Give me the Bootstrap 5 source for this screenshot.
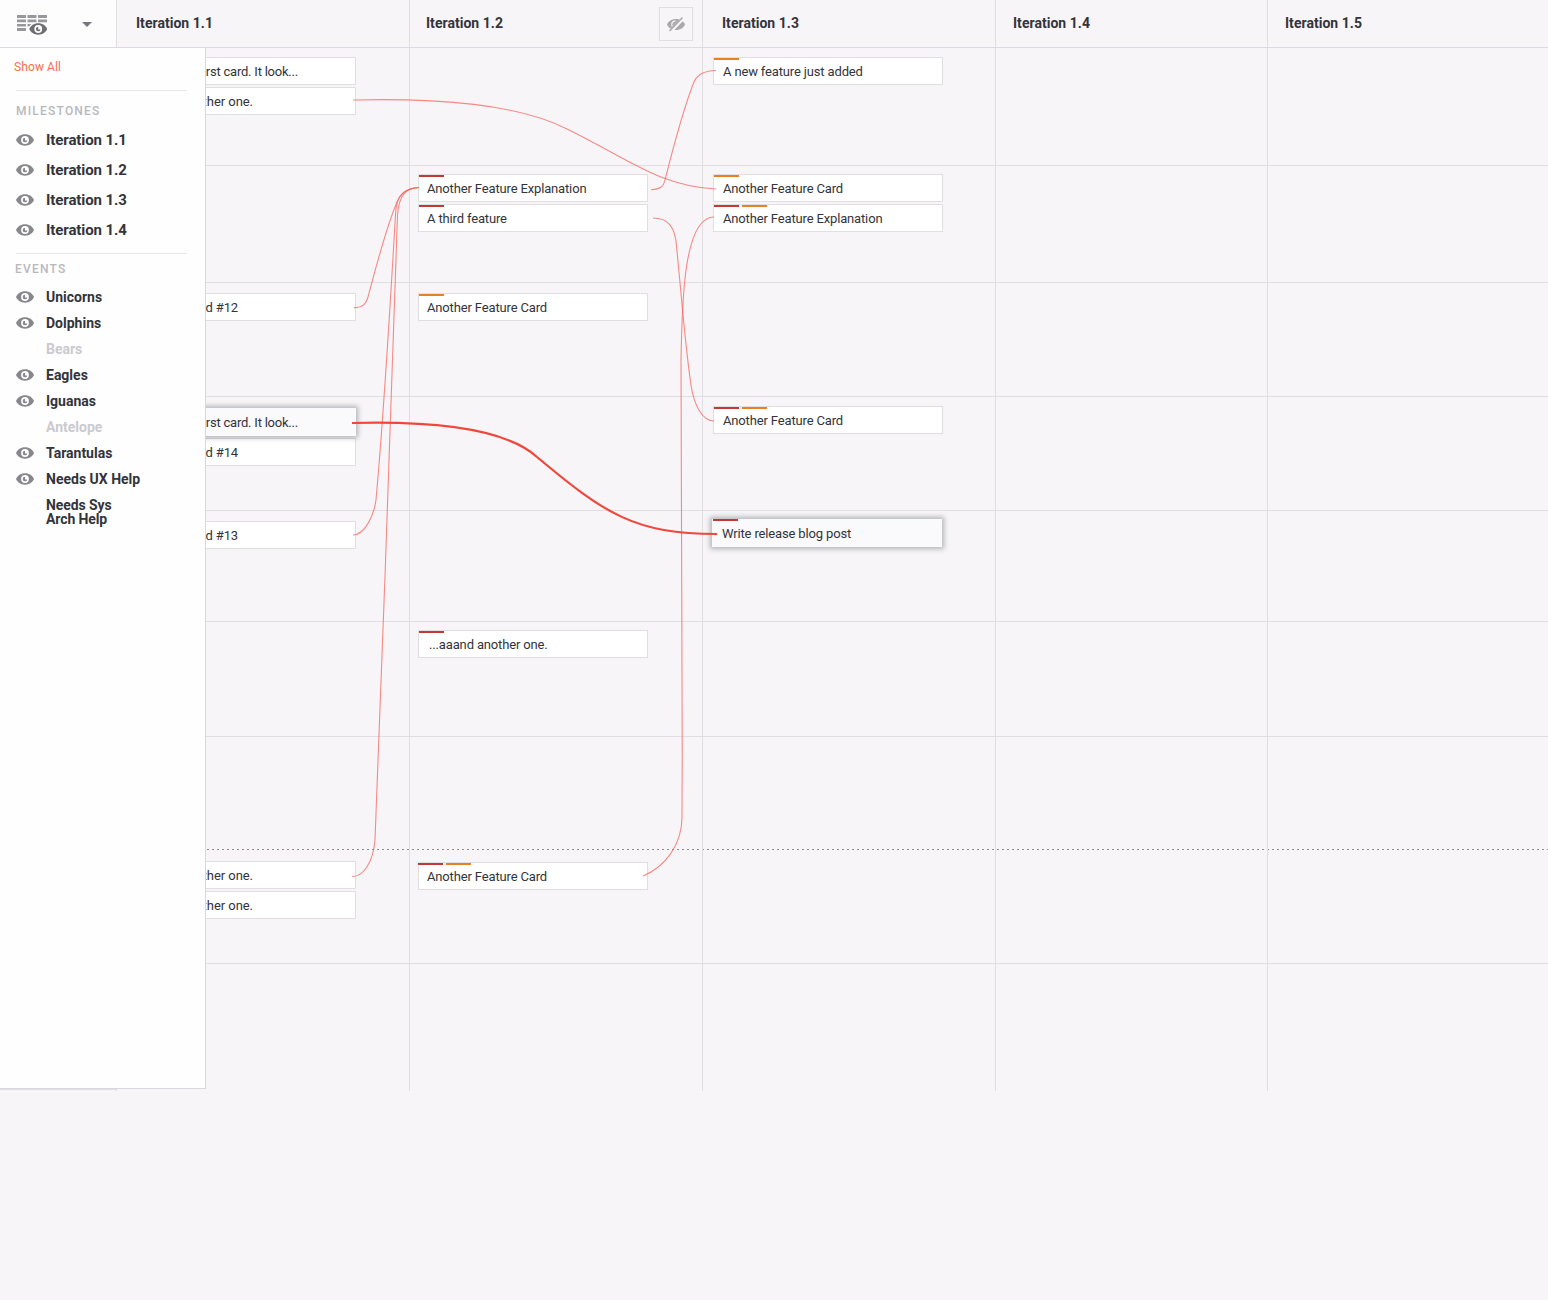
<!DOCTYPE html>
<html lang="en">
<head>
<meta charset="utf-8">
<meta name="viewport" content="width=device-width, initial-scale=1">
<title>Iteration board</title>
<link href="https://cdn.jsdelivr.net/npm/bootstrap@5.3.0/dist/css/bootstrap.min.css" rel="stylesheet">
<style>
body{background:#f7f5f8;font-family:Roboto,"Liberation Sans",sans-serif;font-size:13px;line-height:20px;color:#33343a;overflow-x:hidden}
.board{--line:#e0dee3;width:1548px;height:1300px}
.board-head{height:48px;border-bottom:1px solid #dddbe1}
.head-cell,.lane-cell{border-right:1px solid var(--line);flex:none}
.head-cell{font-size:14px;font-weight:700;padding-bottom:1px;letter-spacing:.03px}
.head-cell:last-child,.lane-cell:last-child{border-right:0}
.w-menu{width:117px}.w-wide{width:293px}.w-mid{width:272px}.w-last{width:280px}
.ps-a{padding-left:19px}.ps-b{padding-left:16px}.ps-c{padding-left:19px}.ps-d{padding-left:17px}
.menu-toggle{padding:2px 24px 0 17px;background:#fdfdfe}
.hide-btn{width:34px;height:34px;border:1px solid #e0dee3;border-radius:0;margin:2px 9px 0 0;padding:0}
.lane{border-bottom:1px solid var(--line);flex:none}
.lane-dotted{border-bottom:0;background:repeating-linear-gradient(90deg,#8e8d93 0 2px,transparent 2px 5px) 207px 100%/100% 1px no-repeat}
.lane:last-child{border-bottom:0}
.lane-cell{display:flex;flex-direction:column;gap:2px}
.in-1{padding-left:9px}.in-2{padding-left:8px}.in-3{padding-left:10px}
.dp-8{padding-top:8px}.dp-9{padding-top:9px}.dp-10{padding-top:10px}.dp-11{padding-top:11px}.dp-12{padding-top:12px}
.feature{position:relative;width:230px;height:28px;flex:none;background:#fff;border:1px solid var(--line);padding:2px 8px 0;display:flex;align-items:center;white-space:nowrap;letter-spacing:-.15px}
.in-3 .feature{padding-left:9px}
.feature.end-long{justify-content:flex-end;padding-right:57px;letter-spacing:-.22px}
.feature.end-num{justify-content:flex-end;padding-right:117px}
.feature.end-one{justify-content:flex-end;padding-right:102px;letter-spacing:-.05px}
.feature.picked{background:#faf9fc;border-color:#faf9fc;box-shadow:0 0 5px 2px rgba(50,55,65,.34);z-index:1}
.feature.nudge{margin-left:-1px}
.tags{position:absolute;left:0;top:0;display:flex;gap:3px}
.tags.flush{left:-1px}
.picked .tags{top:-1px}
.tags i{width:25px;height:2px;background:#c23a34}
.tags i.amber{background:#e68225}
.ms-dots{margin-left:2px}
.links{position:absolute;left:0;top:0;pointer-events:none;z-index:2}
.links path{fill:none;stroke:#f4665f;stroke-opacity:.75;stroke-width:1.1}
.links .strong{stroke:#f0463b;stroke-opacity:1;stroke-width:2.2}
.filter{position:absolute;left:0;top:48px;width:206px;height:1041px;background:#fefefe;border-right:1px solid #d9d7dd;border-bottom:1px solid #d9d7dd;z-index:3}
.gutter-end{width:117px;height:1px;background:#e0dee3;position:absolute;left:0;top:1089px}
.show-all{font-size:12px;color:#f3704f;text-decoration:none;padding:9px 0 13px 14px;letter-spacing:.1px}
.rule{height:1px;background:#e8e7ea;margin:0 18px 0 16px}
.group-name{font-size:12px;font-weight:500;letter-spacing:1.22px;color:#b9b8be;line-height:20px}
.miles-name{padding:10px 0 4px 16px}
.events-name{padding:5px 0 5px 15px}
.item{display:flex;align-items:center;padding-left:16px;font-weight:700;gap:12px}
.item svg,.item .no-eye{width:18px;flex:none}
.iter .item{height:30px;font-size:15px;letter-spacing:-.1px}
.events .item{height:26px;font-size:14px}
.events .off{color:#cbcacf}
.events .two{height:40px;line-height:14px;letter-spacing:-.1px}
</style>
</head>
<body>
<svg width="0" height="0" class="position-absolute" aria-hidden="true">
  <symbol id="eye" viewBox="0 0 18 12">
    <path fill="currentColor" d="M0 6C1.500 2.600 4.500.3 9 .3S16.500 2.600 18 6C16.500 9.400 13.500 11.700 9 11.700S1.500 9.400 0 6Z"/>
    <circle cx="9" cy="6" r="3.900" fill="#fff"/>
    <path fill="currentColor" d="M9 3.700A2.300 2.300 0 1 0 11.300 6.400H9Z"/>
  </symbol>
</svg>
<div class="board position-relative overflow-hidden">
  <header class="board-head d-flex">
    <div class="head-cell w-menu menu-toggle d-flex align-items-center justify-content-between">
      <svg width="31" height="20" viewBox="0 0 31 20">
        <path fill="#98979b" d="M0 0h9v3H0zM10.500 0h9v3h-9zM21 0h9v3h-9zM0 4.500h9v2.700H0zM10.500 4.500h9v2.700h-9zM21 4.500h9v2.700h-9zM0 9h9v2.600H0zM0 13h9v3H0zM10.500 9h4l-2.500 2.600h-1.500z"/>
        <path fill="#fdfdfe" d="M11 14C14 6 28 6 31 14V20H11Z"/>
        <svg x="12" y="8" width="18.500" height="12" color="#6f6e73"><use href="#eye"/></svg>
      </svg>
      <svg width="10" height="5" viewBox="0 0 10 5"><path fill="#77767b" d="M0 0h10L5 5Z"/></svg>
    </div>
    <div class="head-cell w-wide ps-a d-flex align-items-center">Iteration 1.1</div>
    <div class="head-cell w-wide ps-b d-flex align-items-center justify-content-between">Iteration 1.2
      <button class="btn hide-btn d-flex align-items-center justify-content-center" type="button" aria-label="Hide">
        <svg width="20" height="16" viewBox="0 0 20 16"><path fill="#a9a8ac" d="M1 8.500C2.500 5.300 5.500 3 10 3s7.500 2.300 9 5.500C17.500 11.700 14.500 14 10 14S2.500 11.700 1 8.500Z"/><path d="M9.500 4.800A3.800 3.800 0 0 0 6.200 10.500" fill="none" stroke="#f7f5f8" stroke-width="1.300"/><path d="M4.500 15.500 17.500 2" stroke="#f7f5f8" stroke-width="3.400"/><path d="M3.500 15 16.500 1.500" stroke="#a9a8ac" stroke-width="1.500"/></svg>
      </button>
    </div>
    <div class="head-cell w-wide ps-c d-flex align-items-center">Iteration 1.3</div>
    <div class="head-cell w-mid ps-d d-flex align-items-center">Iteration 1.4</div>
    <div class="head-cell w-last ps-d d-flex align-items-center">Iteration 1.5</div>
  </header>

  <main>
    <section class="lane d-flex" style="height:118px">
      <div class="lane-cell w-menu"></div>
      <div class="lane-cell w-wide in-1 dp-9">
        <div class="feature end-long">This is my first card. It look...</div>
        <div class="feature end-one">...aaand another one.</div>
      </div>
      <div class="lane-cell w-wide"></div>
      <div class="lane-cell w-wide in-3 dp-9"><div class="feature"><span class="tags"><i class="amber"></i></span>A new feature just added</div></div>
      <div class="lane-cell w-mid"></div><div class="lane-cell w-last"></div>
    </section>
    <section class="lane d-flex" style="height:117px">
      <div class="lane-cell w-menu"></div><div class="lane-cell w-wide"></div>
      <div class="lane-cell w-wide in-2 dp-8">
        <div class="feature"><span class="tags"><i></i></span>Another Feature Explanation</div>
        <div class="feature"><span class="tags"><i></i></span>A third feature</div>
      </div>
      <div class="lane-cell w-wide in-3 dp-8">
        <div class="feature"><span class="tags"><i class="amber"></i></span>Another Feature Card</div>
        <div class="feature"><span class="tags"><i></i><i class="amber"></i></span>Another Feature Explanation</div>
      </div>
      <div class="lane-cell w-mid"></div><div class="lane-cell w-last"></div>
    </section>
    <section class="lane d-flex" style="height:114px">
      <div class="lane-cell w-menu"></div>
      <div class="lane-cell w-wide in-1 dp-10"><div class="feature end-num">Feature Card #12</div></div>
      <div class="lane-cell w-wide in-2 dp-10"><div class="feature"><span class="tags"><i class="amber"></i></span>Another Feature Card</div></div>
      <div class="lane-cell w-wide"></div><div class="lane-cell w-mid"></div><div class="lane-cell w-last"></div>
    </section>
    <section class="lane d-flex" style="height:114px">
      <div class="lane-cell w-menu"></div>
      <div class="lane-cell w-wide in-1 dp-11">
        <div class="feature end-long picked">This is my first card. It look...</div>
        <div class="feature end-num">Feature Card #14</div>
      </div>
      <div class="lane-cell w-wide"></div>
      <div class="lane-cell w-wide in-3 dp-9"><div class="feature"><span class="tags"><i></i><i class="amber"></i></span>Another Feature Card</div></div>
      <div class="lane-cell w-mid"></div><div class="lane-cell w-last"></div>
    </section>
    <section class="lane d-flex" style="height:111px">
      <div class="lane-cell w-menu"></div>
      <div class="lane-cell w-wide in-1 dp-10"><div class="feature end-num">Feature Card #13</div></div>
      <div class="lane-cell w-wide"></div>
      <div class="lane-cell w-wide in-3 dp-8"><div class="feature picked nudge"><span class="tags"><i></i></span>Write release blog post</div></div>
      <div class="lane-cell w-mid"></div><div class="lane-cell w-last"></div>
    </section>
    <section class="lane d-flex" style="height:115px">
      <div class="lane-cell w-menu"></div><div class="lane-cell w-wide"></div>
      <div class="lane-cell w-wide in-2 dp-8"><div class="feature"><span class="tags"><i></i></span><span class="ms-dots">...aaand another one.</span></div></div>
      <div class="lane-cell w-wide"></div><div class="lane-cell w-mid"></div><div class="lane-cell w-last"></div>
    </section>
    <section class="lane lane-dotted d-flex" style="height:113px">
      <div class="lane-cell w-menu"></div><div class="lane-cell w-wide"></div><div class="lane-cell w-wide"></div><div class="lane-cell w-wide"></div><div class="lane-cell w-mid"></div><div class="lane-cell w-last"></div>
    </section>
    <section class="lane d-flex" style="height:114px">
      <div class="lane-cell w-menu"></div>
      <div class="lane-cell w-wide in-1 dp-11">
        <div class="feature end-one">...aaand another one.</div>
        <div class="feature end-one">...aaand another one.</div>
      </div>
      <div class="lane-cell w-wide in-2 dp-12"><div class="feature"><span class="tags flush"><i></i><i class="amber"></i></span>Another Feature Card</div></div>
      <div class="lane-cell w-wide"></div><div class="lane-cell w-mid"></div><div class="lane-cell w-last"></div>
    </section>
    <section class="lane d-flex" style="height:127px">
      <div class="lane-cell w-menu"></div><div class="lane-cell w-wide"></div><div class="lane-cell w-wide"></div><div class="lane-cell w-wide"></div><div class="lane-cell w-mid"></div><div class="lane-cell w-last"></div>
    </section>
  </main>

  <svg class="links" width="1548" height="1091" viewBox="0 0 1548 1091">
    <path d="M353 100C440 98 517 104 567 129C625 157 660 187 716 189"/>
    <path d="M651 189.700C660 189 663.500 187 665 180C674 145 682 112 694 82C698 73 706 71 716 70.500"/>
    <path d="M653 218C669 218 674 228 676 241C681 290 685 345 691 385C694 405 702 421 714 421"/>
    <path d="M643 876C665 867 682 845 682 817C683 660 681 500 681 360C682 300 684 217 714 217"/>
    <path d="M354 307.600C363 307.500 366 304 368 297C377 263 386 228 397 202C401 192 408 188 419 187.500"/>
    <path d="M353 535C365 535 374 515 376 500C385 400 391 290 395.500 215C396 194 405 188 419 187.500"/>
    <path d="M352 876.500C363 877 373 863 375 840C384 640 390 400 397.500 215C399 195 406 188 419 187.500"/>
    <path class="strong" d="M352 423C430 421 505 428 537 457C605 514 635 534 717 534"/>
  </svg>

  <div class="gutter-end"></div>
  <aside class="filter d-flex flex-column">
    <a class="show-all d-block" href="#">Show All</a>
    <div class="rule"></div>
    <div class="group-name miles-name">MILESTONES</div>
    <div class="iter">
      <div class="item"><svg height="12" color="#88878c"><use href="#eye"/></svg>Iteration 1.1</div>
      <div class="item"><svg height="12" color="#88878c"><use href="#eye"/></svg>Iteration 1.2</div>
      <div class="item"><svg height="12" color="#88878c"><use href="#eye"/></svg>Iteration 1.3</div>
      <div class="item"><svg height="12" color="#88878c"><use href="#eye"/></svg>Iteration 1.4</div>
    </div>
    <div class="rule mt-2"></div>
    <div class="group-name events-name">EVENTS</div>
    <div class="events">
      <div class="item"><svg height="12" color="#88878c"><use href="#eye"/></svg>Unicorns</div>
      <div class="item"><svg height="12" color="#88878c"><use href="#eye"/></svg>Dolphins</div>
      <div class="item off"><span class="no-eye"></span>Bears</div>
      <div class="item"><svg height="12" color="#88878c"><use href="#eye"/></svg>Eagles</div>
      <div class="item"><svg height="12" color="#88878c"><use href="#eye"/></svg>Iguanas</div>
      <div class="item off"><span class="no-eye"></span>Antelope</div>
      <div class="item"><svg height="12" color="#88878c"><use href="#eye"/></svg>Tarantulas</div>
      <div class="item"><svg height="12" color="#88878c"><use href="#eye"/></svg>Needs UX Help</div>
      <div class="item two"><span class="no-eye"></span><span>Needs Sys<br>Arch Help</span></div>
    </div>
  </aside>
</div>
<script src="https://cdn.jsdelivr.net/npm/bootstrap@5.3.0/dist/js/bootstrap.bundle.min.js"></script>
</body>
</html>
